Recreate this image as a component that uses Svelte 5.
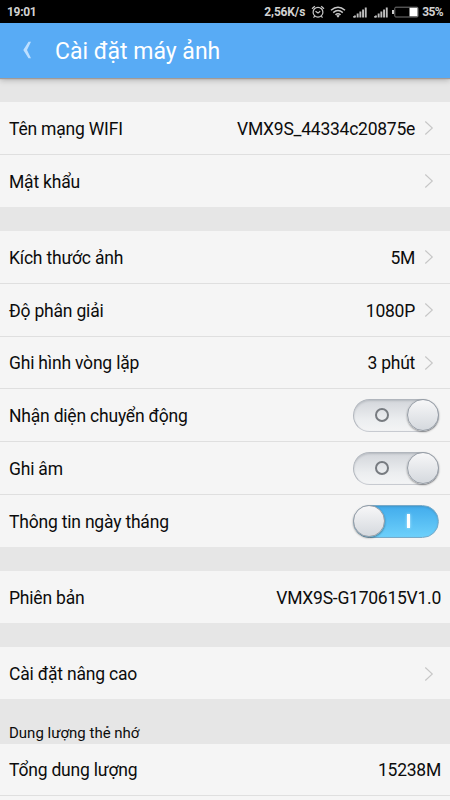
<script>
  const groups = [
    [
      { label: 'Tên mạng WIFI', value: 'VMX9S_44334c20875e', arrow: true },
      { label: 'Mật khẩu', arrow: true }
    ],
    [
      { label: 'Kích thước ảnh', value: '5M', arrow: true },
      { label: 'Độ phân giải', value: '1080P', arrow: true },
      { label: 'Ghi hình vòng lặp', value: '3 phút', arrow: true },
      { label: 'Nhận diện chuyển động', toggle: 'off' },
      { label: 'Ghi âm', toggle: 'off' },
      { label: 'Thông tin ngày tháng', toggle: 'on' }
    ],
    [{ label: 'Phiên bản', value: 'VMX9S-G170615V1.0' }],
    [{ label: 'Cài đặt nâng cao', arrow: true }]
  ];
  const bars = [2, 4, 6, 8, 10];
</script>

<div class="screen">
  <div class="status">
    <span class="time">19:01</span>
    <span class="speed">2,56K/s</span>
    <svg class="alarm" width="14" height="14" viewBox="0 0 14 14" fill="none" stroke="#c9c9c9" stroke-width="1.2">
      <circle cx="7" cy="7.2" r="4.9" />
      <path d="M4.5 6.2 7 8.1 9.2 6.3M1 3.7 3.8 1.2M10.2 1.2 13 3.7M3.7 11.2 2.5 12.7M10.3 11.2 11.5 12.7" />
    </svg>
    <svg class="wifi" width="16" height="12" viewBox="0 0 16 12" fill="none" stroke="#c9c9c9" stroke-width="1.5">
      <path d="M1 4.2Q8-1.8 15 4.2M3.2 6.6Q8 2.5 12.8 6.6M5.4 8.8Q8 6.6 10.6 8.8" />
      <path d="M6.2 9.6Q8 8.4 9.8 9.6L8 11.8z" fill="#c9c9c9" stroke="none" />
    </svg>
    {#each [0, 1] as sim (sim)}
      <svg class="signal" width="14" height="11" viewBox="0 0 14 11" fill="#bdbdbd">
        {#each bars as h, i}
          <rect x={1 + i * 2.7} y={10.5 - h} width="1.9" height={h} />
        {/each}
        <rect x="0" y="9.2" width="2" height="1.3" />
      </svg>
    {/each}
    <svg class="battery" width="27" height="12" viewBox="0 0 27 12">
      <rect x="0" y="4" width="2" height="4" fill="#ccc" />
      <rect x="2.8" y="1.2" width="23.2" height="9.8" rx="1" fill="none" stroke="#777" />
      <rect x="17.5" y="1.8" width="8" height="8.5" fill="#fff" />
    </svg>
    <span class="percent">35%</span>
  </div>

  <header>
    <svg width="9" height="18" viewBox="0 0 9 18" fill="#bddfff">
      <path d="M5.5.7H8L4 9l4 8.2H5.5L.3 9z" />
    </svg>
    <h1>Cài đặt máy ảnh</h1>
  </header>

  <main>
    {#each groups as rows}
      <section>
        {#each rows as row}
          <div class="row">
            <span class="label">{row.label}</span>
            {#if row.value}<span class="value">{row.value}</span>{/if}
            {#if row.arrow}
              <svg class="arrow" width="10" height="16" viewBox="0 0 10 16" fill="none" stroke="#c6c6c6" stroke-width="1.1">
                <path d="M1.3 1.5 8.3 8 1.3 14.5" />
              </svg>
            {/if}
            {#if row.toggle}
              <div class="toggle {row.toggle}"><i class="mark"></i><i class="knob"></i></div>
            {/if}
          </div>
        {/each}
      </section>
    {/each}
    <h2>Dung lượng thẻ nhớ</h2>
    <section class="storage">
      <div class="row"><span class="label">Tổng dung lượng</span><span class="value">15238M</span></div>
      <div class="row"></div>
    </section>
  </main>
</div>

<style>
  :global(body) { margin: 0; background: #e6e6e6; }
  .screen {
    width: 450px; height: 800px; overflow: hidden;
    display: flex; flex-direction: column;
    background: #e6e6e6; color: #0c0c0c;
    font-family: Roboto, "Noto Sans", sans-serif;
  }
  .status {
    flex: none; height: 23px; box-sizing: border-box; padding: 1px 7px 0;
    display: flex; align-items: center;
    background: #000; color: #d2d2d2;
    font-size: 12px; font-weight: 700; line-height: 22px;
  }
  .time { margin-right: auto; }
  .speed { letter-spacing: -.15px; }
  .time { letter-spacing: -.3px; }
  .percent { letter-spacing: -.6px; }
  .alarm { margin-left: 6px; }
  .wifi { margin-left: 5px; }
  .signal { margin: 1px 0 0 7px; }
  .battery { margin: 0 3px 0 4px; }
  header {
    flex: none; height: 55px; box-sizing: border-box; padding-left: 23px;
    display: flex; align-items: center;
    position: relative; background: #58abf5;
    box-shadow: 0 1px 1px #a39b96, 0 2px 6px rgba(0, 0, 0, .25);
  }
  header svg { margin-bottom: 1px; }
  h1 { margin: 3px 0 0 23px; font-size: 23px; line-height: 32px; font-weight: 400; color: #fff; }
  main { padding-top: 24px; }
  section { margin-bottom: 24.2px; }
  .row {
    height: 52.8px; box-sizing: border-box; padding: 1px 9px 0;
    display: flex; align-items: center;
    background: #f5f5f5; border-bottom: 1px solid #dfdfdf;
    font-size: 17.5px; line-height: 24px; white-space: nowrap;
    letter-spacing: -.2px;
  }
  .row:last-child { height: 52px; border-bottom: 0; }
  .label, .value { padding-top: 1px; }
  .value { letter-spacing: -.25px; }
  .label { margin-right: auto; }
  .arrow { margin: 0 7.5px 0 8.5px; }
  h2 { margin: -2px 0 0; padding: 0 9px; height: 22px; font-size: 15px; line-height: 22px; font-weight: 400; }
  .toggle {
    position: relative; width: 86px; height: 33px; box-sizing: border-box; margin-right: 2px;
    border: 1px solid #b1b6bd; border-bottom-color: #c7cad0; border-radius: 17px;
    background: linear-gradient(#d3d6db, #eceef0 65%, #f3f4f5);
    box-shadow: inset 0 1px 2px rgba(60, 70, 80, .2);
  }
  .toggle.on { background: linear-gradient(#42acec, #6dd0fb); border-color: #78aac8; }
  .knob {
    position: absolute; top: -1px; right: -1px; width: 32px; height: 32px; box-sizing: border-box;
    border: 1px solid #969da6; border-radius: 50%;
    background: linear-gradient(#f7f7f8, #d5d9de);
    box-shadow: 0 1px 2px rgba(0, 0, 0, .4);
  }
  .on .knob { right: auto; left: -1px; }
  .mark {
    position: absolute; left: 21px; top: 8px; width: 14px; height: 14px; box-sizing: border-box;
    border: 2px solid #777b80; border-radius: 50%;
  }
  .on .mark {
    left: 53px; top: 8px; width: 3px; height: 14px;
    border: 0; border-radius: 0; background: #fff; box-shadow: 0 0 3px #bdeaff;
  }
</style>
